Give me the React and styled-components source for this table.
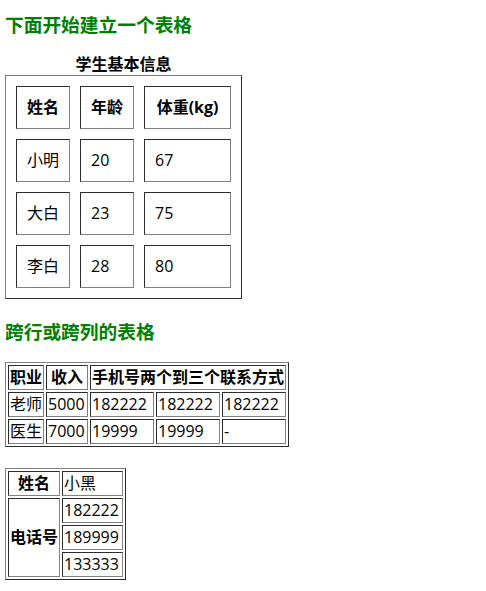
import React from 'react';
import styled, { createGlobalStyle } from 'styled-components';

const GlobalStyle = createGlobalStyle`
body {
  margin: 0;
  background: #fff;
  color: #000;
  font-family: "Open Sans", "Noto Sans CJK SC", sans-serif;
  font-size: 16px;
}
`;

const Page = styled.div`
padding: 12px 5px 0;
`;

const Title = styled.h3`
margin: ${p => p.$top || 0}px 0 ${p => p.$bottom}px;
color: green;
font-size: 18.72px;
font-weight: bold;
line-height: 25px;
`;

// looks like the old table border="1" rendering
const Table = styled.table`
border: 1px outset gray;
border-collapse: separate;
border-spacing: ${p => p.$spacing}px;
margin-top: ${p => p.$top || 0}px;
line-height: 21px;

& th, & td {
  border: 1px inset gray;
  padding: ${p => p.$pad}px;
  vertical-align: middle;
  white-space: nowrap;
}
`;

const Caption = styled.caption`
font-weight: bold;
line-height: 21px;
`;

const Th = styled.th`
font-weight: bold;
text-align: center;
width: ${p => (p.$w ? p.$w + 'px' : 'auto')};
`;

const Td = styled.td`
text-align: left;
width: ${p => (p.$w ? p.$w + 'px' : 'auto')};
`;

const students = [
  ['小明', '20', '67'],
  ['大白', '23', '75'],
  ['李白', '28', '80'],
];

function App() {
  return (
    <Page>
      <GlobalStyle />
      <Title $bottom={17}>下面开始建立一个表格</Title>
      <Table $spacing={10} $pad={10}>
        <Caption>学生基本信息</Caption>
        <tbody>
          <tr>
            <Th $w={32}>姓名</Th>
            <Th $w={32}>年龄</Th>
            <Th $w={65}>体重(kg)</Th>
          </tr>
          {students.map(s => (
            <tr key={s[0]}>
              <Td>{s[0]}</Td>
              <Td>{s[1]}</Td>
              <Td>{s[2]}</Td>
            </tr>
          ))}
        </tbody>
      </Table>

      <Title $top={20} $bottom={18}>跨行或跨列的表格</Title>
      <Table $spacing={2} $pad={1}>
        <tbody>
          <tr>
            <Th>职业</Th>
            <Th>收入</Th>
            <Th colSpan={3}>手机号两个到三个联系方式</Th>
          </tr>
          <tr>
            <Td $w={32}>老师</Td>
            <Td $w={38}>5000</Td>
            <Td $w={60}>182222</Td>
            <Td $w={60}>182222</Td>
            <Td $w={60}>182222</Td>
          </tr>
          <tr>
            <Td>医生</Td>
            <Td>7000</Td>
            <Td>19999</Td>
            <Td>19999</Td>
            <Td>-</Td>
          </tr>
        </tbody>
      </Table>

      <Table $spacing={2} $pad={1} $top={21}>
        <tbody>
          <tr>
            <Th $w={48}>姓名</Th>
            <Td $w={57}>小黑</Td>
          </tr>
          <tr>
            <Th rowSpan={3}>电话号</Th>
            <Td>182222</Td>
          </tr>
          <tr>
            <Td>189999</Td>
          </tr>
          <tr>
            <Td>133333</Td>
          </tr>
        </tbody>
      </Table>
    </Page>
  );
}

export default App;
